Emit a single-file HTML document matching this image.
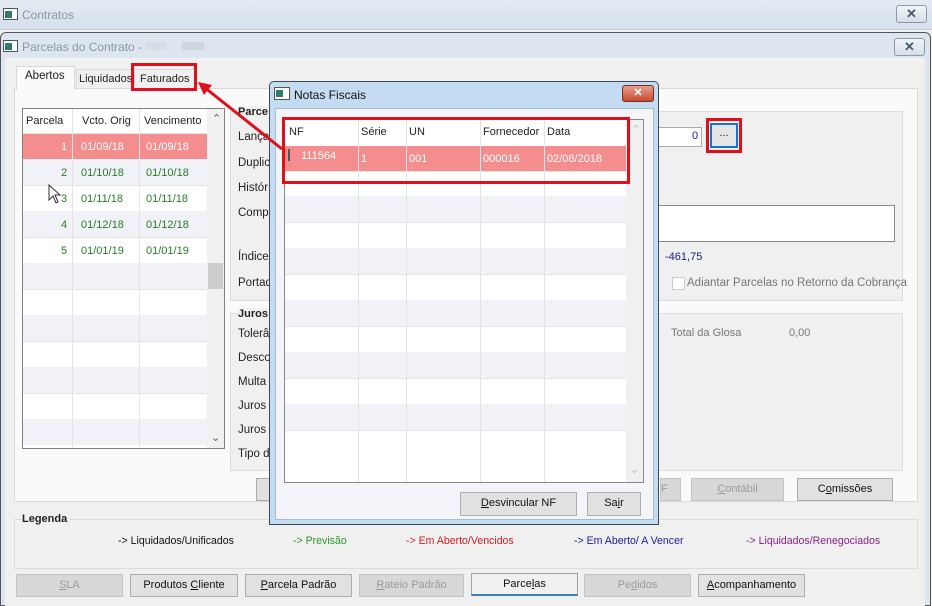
<!DOCTYPE html>
<html><head><meta charset="utf-8"><style>
*{box-sizing:border-box;margin:0;padding:0}
body{width:932px;height:606px;overflow:hidden;background:#f0f0f0;font-family:"Liberation Sans",sans-serif;font-size:11px;color:#222;position:relative}
.a{position:absolute}
.t{position:absolute;white-space:nowrap}
.xb{position:absolute;width:31px;height:18px;border:1px solid #8a9aac;border-radius:3px;background:linear-gradient(#f2f5f9,#d6dee8);color:#4a5a6c;font-size:13px;text-align:center;line-height:15px;font-weight:bold}
.btn{position:absolute;height:23px;border:1px solid #adadad;background:#e1e1e1;text-align:center;line-height:21px;font-size:11px;color:#111}
.dis{color:#9a9a9a;background:#d8d8d8;border-color:#c4c4c4}
.lbl{position:absolute;font-size:11.5px;color:#222;white-space:nowrap}
.lg{position:absolute;white-space:nowrap;transform:scaleX(.96);transform-origin:left}
</style></head><body>
<div class="a" style="left:0;top:0;width:932px;height:30px;background:linear-gradient(#e4ebf3,#d5dfea);border-bottom:1px solid #c0ccd8"></div>
<div class="a" style="left:3px;top:8px;width:15px;height:12px;border:1px solid #555;background:#fff"><div class="a" style="left:1px;top:2px;width:7px;height:7px;background:#2e7d6c"></div></div>
<div class="t" style="left:22px;top:8px;font-size:12px;color:#8a96a2">Contratos</div>
<div class="xb" style="left:896px;top:5px">✕</div>
<div class="a" style="left:0;top:32px;width:931px;height:574px;border:1px solid #555;border-radius:6px 6px 0 0;background:#dde6f0"></div>
<div class="a" style="left:3px;top:40px;width:15px;height:12px;border:1px solid #555;background:#fff"><div class="a" style="left:1px;top:2px;width:7px;height:7px;background:#2e7d6c"></div></div>
<div class="t" style="left:22px;top:40px;font-size:12px;color:#8a96a2">Parcelas do Contrato -</div>
<div class="a" style="left:146px;top:42px;width:20px;height:8px;background:#d8dde4"></div>
<div class="a" style="left:182px;top:42px;width:22px;height:8px;background:#d0d6de"></div>
<div class="xb" style="left:894px;top:38px">✕</div>
<div class="a" style="left:5px;top:58px;width:920px;height:548px;background:#f0f0f0"></div>
<div class="a" style="left:14px;top:88px;width:904px;height:414px;background:#fafafa;border:1px solid #d9d9d9"></div>
<div class="a" style="left:16px;top:66px;width:59px;height:24px;background:#fafafa;border:1px solid #d9d9d9;border-bottom:none"></div>
<div class="t" style="left:25px;top:70px;font-size:11.5px">Abertos</div>
<div class="a" style="left:76px;top:69px;width:58px;height:20px;background:#f0f0f0;border:1px solid #d9d9d9"></div>
<div class="t" style="left:79px;top:73px">Liquidados</div>
<div class="a" style="left:134px;top:69px;width:62px;height:20px;background:#f0f0f0;border:1px solid #d9d9d9"></div>
<div class="t" style="left:140px;top:73px">Faturados</div>
<div class="a" style="left:22px;top:108px;width:203px;height:341px;border:1px solid #828282;background:#fff;overflow:hidden">
 <div class="a" style="left:0;top:0;width:184px;height:25px;background:#fff;border-bottom:1px solid #e4e4e4"></div>
 <div class="t" style="left:3px;top:6px">Parcela</div>
 <div class="t" style="left:59px;top:6px">Vcto. Orig</div>
 <div class="t" style="left:121px;top:6px">Vencimento</div>
 <div class="a" style="left:0;top:25px;width:184px;height:25px;background:#f48e8e"></div>
 <div class="a" style="left:0;top:50px;width:184px;height:26px;background:#f0f2f8"></div>
 <div class="a" style="left:0;top:102px;width:184px;height:26px;background:#f0f2f8"></div>
 <div class="a" style="left:0;top:154px;width:184px;height:26px;background:#f0f2f8"></div>
 <div class="a" style="left:0;top:206px;width:184px;height:26px;background:#f0f2f8"></div>
 <div class="a" style="left:0;top:258px;width:184px;height:26px;background:#f0f2f8"></div>
 <div class="a" style="left:0;top:310px;width:184px;height:26px;background:#f0f2f8"></div>
 <div class="a" style="left:49px;top:0;width:1px;height:340px;background:#e4e4e4"></div>
 <div class="a" style="left:116px;top:0;width:1px;height:340px;background:#e4e4e4"></div>
 <div class="a" style="left:0;top:76px;width:184px;height:1px;background:#e4e4e4"></div>
 <div class="a" style="left:0;top:128px;width:184px;height:1px;background:#e4e4e4"></div>
 <div class="a" style="left:0;top:180px;width:184px;height:1px;background:#e4e4e4"></div>
 <div class="a" style="left:0;top:232px;width:184px;height:1px;background:#e4e4e4"></div>
 <div class="a" style="left:0;top:284px;width:184px;height:1px;background:#e4e4e4"></div>
 <div class="a" style="left:184px;top:0;width:18px;height:340px;background:#f0f0f0"></div>
 <div class="t" style="left:189px;top:3px;color:#555">&#8963;</div>
 <div class="t" style="left:188px;top:322px;color:#555;font-size:11px">&#8964;</div>
 <div class="a" style="left:185px;top:154px;width:15px;height:26px;background:#cdcdcd"></div>
 <div class="t" style="left:38px;top:32px;color:#fff">1</div><div class="t" style="left:58px;top:32px;color:#fff">01/09/18</div><div class="t" style="left:123px;top:32px;color:#fff">01/09/18</div>
 <div class="t" style="left:38px;top:58px;color:#2a7a2a">2</div><div class="t" style="left:58px;top:58px;color:#2a7a2a">01/10/18</div><div class="t" style="left:123px;top:58px;color:#2a7a2a">01/10/18</div>
 <div class="t" style="left:38px;top:84px;color:#2a7a2a">3</div><div class="t" style="left:58px;top:84px;color:#2a7a2a">01/11/18</div><div class="t" style="left:123px;top:84px;color:#2a7a2a">01/11/18</div>
 <div class="t" style="left:38px;top:110px;color:#2a7a2a">4</div><div class="t" style="left:58px;top:110px;color:#2a7a2a">01/12/18</div><div class="t" style="left:123px;top:110px;color:#2a7a2a">01/12/18</div>
 <div class="t" style="left:38px;top:136px;color:#2a7a2a">5</div><div class="t" style="left:58px;top:136px;color:#2a7a2a">01/01/19</div><div class="t" style="left:123px;top:136px;color:#2a7a2a">01/01/19</div>
</div>
<svg class="a" style="left:48px;top:184px" width="14" height="20"><path d="M1 1 L1 16 L5 12 L8 19 L10 18 L7 11 L12 11 Z" fill="#fff" stroke="#333"/></svg>
<div class="a" style="left:230px;top:111px;width:673px;height:190px;border:1px solid #dcdcdc;background:#f0f0f0"></div>
<div class="a" style="left:230px;top:313px;width:673px;height:158px;border:1px solid #dcdcdc;background:#f0f0f0"></div>
<div class="t" style="left:238px;top:106px;font-weight:bold;background:#f0f0f0">Parce</div>
<div class="t" style="left:238px;top:308px;font-weight:bold;background:#f0f0f0">Juros</div>
<div class="lbl" style="left:238px;top:131px">Lança</div>
<div class="lbl" style="left:238px;top:157px">Duplica</div>
<div class="lbl" style="left:238px;top:182px">Histór</div>
<div class="lbl" style="left:238px;top:207px">Compl</div>
<div class="lbl" style="left:238px;top:251px">Índice</div>
<div class="lbl" style="left:238px;top:277px">Portad</div>
<div class="lbl" style="left:238px;top:328px">Tolerâ</div>
<div class="lbl" style="left:238px;top:352px">Desco</div>
<div class="lbl" style="left:238px;top:376px">Multa</div>
<div class="lbl" style="left:238px;top:400px">Juros</div>
<div class="lbl" style="left:238px;top:424px">Juros</div>
<div class="lbl" style="left:238px;top:448px">Tipo d</div>
<div class="a" style="left:655px;top:127px;width:47px;height:20px;background:#fff;border:1px solid #aaa"></div>
<div class="t" style="left:692px;top:130px;color:#1a1a8a">0</div>
<div class="a" style="left:710px;top:123px;width:28px;height:25px;background:#e5e5e5;border:2px solid #0a78d7;text-align:center;line-height:16px">...</div>
<div class="a" style="left:655px;top:205px;width:240px;height:37px;background:#fff;border:1px solid #888"></div>
<div class="t" style="left:665px;top:251px;color:#1a1a8a">-461,75</div>
<div class="a" style="left:672px;top:277px;width:13px;height:13px;background:#fff;border:1px solid #ccc"></div>
<div class="t" style="left:687px;top:277px;color:#777;font-size:11.5px">Adiantar Parcelas no Retorno da Cobrança</div>
<div class="t" style="left:671px;top:327px;color:#777">Total da Glosa</div>
<div class="t" style="left:789px;top:327px;color:#777">0,00</div>
<div class="btn" style="left:256px;top:478px;width:30px;border-right:none"></div>
<div class="btn dis" style="left:660px;top:478px;width:21px;text-align:left">F</div>
<div class="btn dis" style="left:691px;top:478px;width:93px"><u>C</u>ontábil</div>
<div class="btn" style="left:797px;top:478px;width:96px">C<u>o</u>missões</div>
<div class="a" style="left:14px;top:519px;width:904px;height:50px;border:1px solid #dcdcdc;background:#f0f0f0"></div>
<div class="t" style="left:22px;top:513px;font-weight:bold;background:#f0f0f0;padding-right:2px">Legenda</div>
<div class="lg" style="left:118px;top:535px;color:#111">-&gt; Liquidados/Unificados</div>
<div class="lg" style="left:293px;top:535px;color:#2a9a2a">-&gt; Previsão</div>
<div class="lg" style="left:406px;top:535px;color:#d02020">-&gt; Em Aberto/Vencidos</div>
<div class="lg" style="left:574px;top:535px;color:#2020a0">-&gt; Em Aberto/ A Vencer</div>
<div class="lg" style="left:746px;top:535px;color:#882288">-&gt; Liquidados/Renegociados</div>
<div class="btn dis" style="left:16px;top:574px;width:107px"><u>S</u>LA</div>
<div class="btn" style="left:130px;top:574px;width:108px">Produtos <u>C</u>liente</div>
<div class="btn" style="left:245px;top:574px;width:107px"><u>P</u>arcela Padrão</div>
<div class="btn dis" style="left:359px;top:574px;width:105px"><u>R</u>ateio Padrão</div>
<div class="btn" style="left:471px;top:573px;width:107px;background:#f0f0f0;border:1px solid #a0a0a0;border-bottom:2px solid #3c7fb1">Parce<u>l</u>as</div>
<div class="btn dis" style="left:584px;top:574px;width:107px">Pe<u>d</u>idos</div>
<div class="btn" style="left:698px;top:574px;width:107px"><u>A</u>companhamento</div>
<div class="a" style="left:269px;top:81px;width:390px;height:444px;border:1px solid #3a4a5a;border-radius:5px 5px 0 0;background:#c4dcf2"></div>
<div class="a" style="left:274px;top:87px;width:16px;height:13px;border:1px solid #555;background:#fff"><div class="a" style="left:1px;top:2px;width:7px;height:7px;background:#2e7d6c"></div></div>
<div class="t" style="left:294px;top:88px;font-size:12px;color:#111">Notas Fiscais</div>
<div class="a" style="left:622px;top:85px;width:32px;height:17px;border:1px solid #7a2a20;border-radius:3px;background:linear-gradient(#e8a090,#c84a30);color:#fff;text-align:center;font-weight:bold;line-height:15px">✕</div>
<div class="a" style="left:275px;top:108px;width:379px;height:412px;background:#f4f5fb;border:1px solid #a8bccc"></div>
<div class="a" style="left:284px;top:119px;width:360px;height:364px;background:#fff;border:1px solid #888;overflow:hidden">
 <div class="a" style="left:0;top:26px;width:341px;height:25px;background:#f48e8e"></div>
 <div class="a" style="left:0;top:76px;width:341px;height:26px;background:#f0f2f8"></div>
 <div class="a" style="left:0;top:128px;width:341px;height:26px;background:#f0f2f8"></div>
 <div class="a" style="left:0;top:180px;width:341px;height:26px;background:#f0f2f8"></div>
 <div class="a" style="left:0;top:232px;width:341px;height:26px;background:#f0f2f8"></div>
 <div class="a" style="left:0;top:284px;width:341px;height:26px;background:#f0f2f8"></div>
 <div class="a" style="left:0;top:51px;width:341px;height:1px;background:#e4e4e4"></div>
 <div class="a" style="left:0;top:102px;width:341px;height:1px;background:#e4e4e4"></div>
 <div class="a" style="left:0;top:154px;width:341px;height:1px;background:#e4e4e4"></div>
 <div class="a" style="left:0;top:206px;width:341px;height:1px;background:#e4e4e4"></div>
 <div class="a" style="left:0;top:258px;width:341px;height:1px;background:#e4e4e4"></div>
 <div class="a" style="left:0;top:310px;width:341px;height:1px;background:#e4e4e4"></div>
 <div class="a" style="left:73px;top:0;width:1px;height:364px;background:#e4e4e4"></div>
 <div class="a" style="left:121px;top:0;width:1px;height:364px;background:#e4e4e4"></div>
 <div class="a" style="left:195px;top:0;width:1px;height:364px;background:#e4e4e4"></div>
 <div class="a" style="left:259px;top:0;width:1px;height:364px;background:#e4e4e4"></div>
 <div class="a" style="left:341px;top:0;width:18px;height:364px;background:#f0f0f0"></div>
 <div class="t" style="left:346px;top:3px;color:#bbb">&#8963;</div>
 <div class="t" style="left:345px;top:343px;color:#bbb;font-size:11px">&#8964;</div>
 <div class="t" style="left:4px;top:6px">NF</div>
 <div class="t" style="left:76px;top:6px">Série</div>
 <div class="t" style="left:124px;top:6px">UN</div>
 <div class="t" style="left:198px;top:6px">Fornecedor</div>
 <div class="t" style="left:262px;top:6px">Data</div>
 <div class="a" style="left:3px;top:29px;width:2px;height:12px;background:#555"></div>
 <div class="t" style="left:16px;top:30px;color:#fff">111564</div>
 <div class="t" style="left:76px;top:33px;color:#fff">1</div>
 <div class="t" style="left:124px;top:33px;color:#fff">001</div>
 <div class="t" style="left:198px;top:33px;color:#fff">000016</div>
 <div class="t" style="left:262px;top:33px;color:#fff">02/08/2018</div>
</div>
<div class="btn" style="left:460px;top:492px;width:117px;height:24px"><u>D</u>esvincular NF</div>
<div class="btn" style="left:587px;top:492px;width:54px;height:24px">Sa<u>i</u>r</div>
<div class="a" style="left:282px;top:117px;width:348px;height:67px;border:3px solid #e0101a"></div>
<div class="a" style="left:131px;top:63px;width:66px;height:28px;border:3px solid #e0101a"></div>
<div class="a" style="left:706px;top:118px;width:36px;height:35px;border:3px solid #e0101a"></div>
<svg class="a" style="left:190px;top:75px" width="100" height="80"><line x1="92" y1="74" x2="14" y2="12" stroke="#e0101a" stroke-width="3"/><path d="M8 7 L22 10 L14 20 Z" fill="#e0101a"/></svg>
</body></html>
